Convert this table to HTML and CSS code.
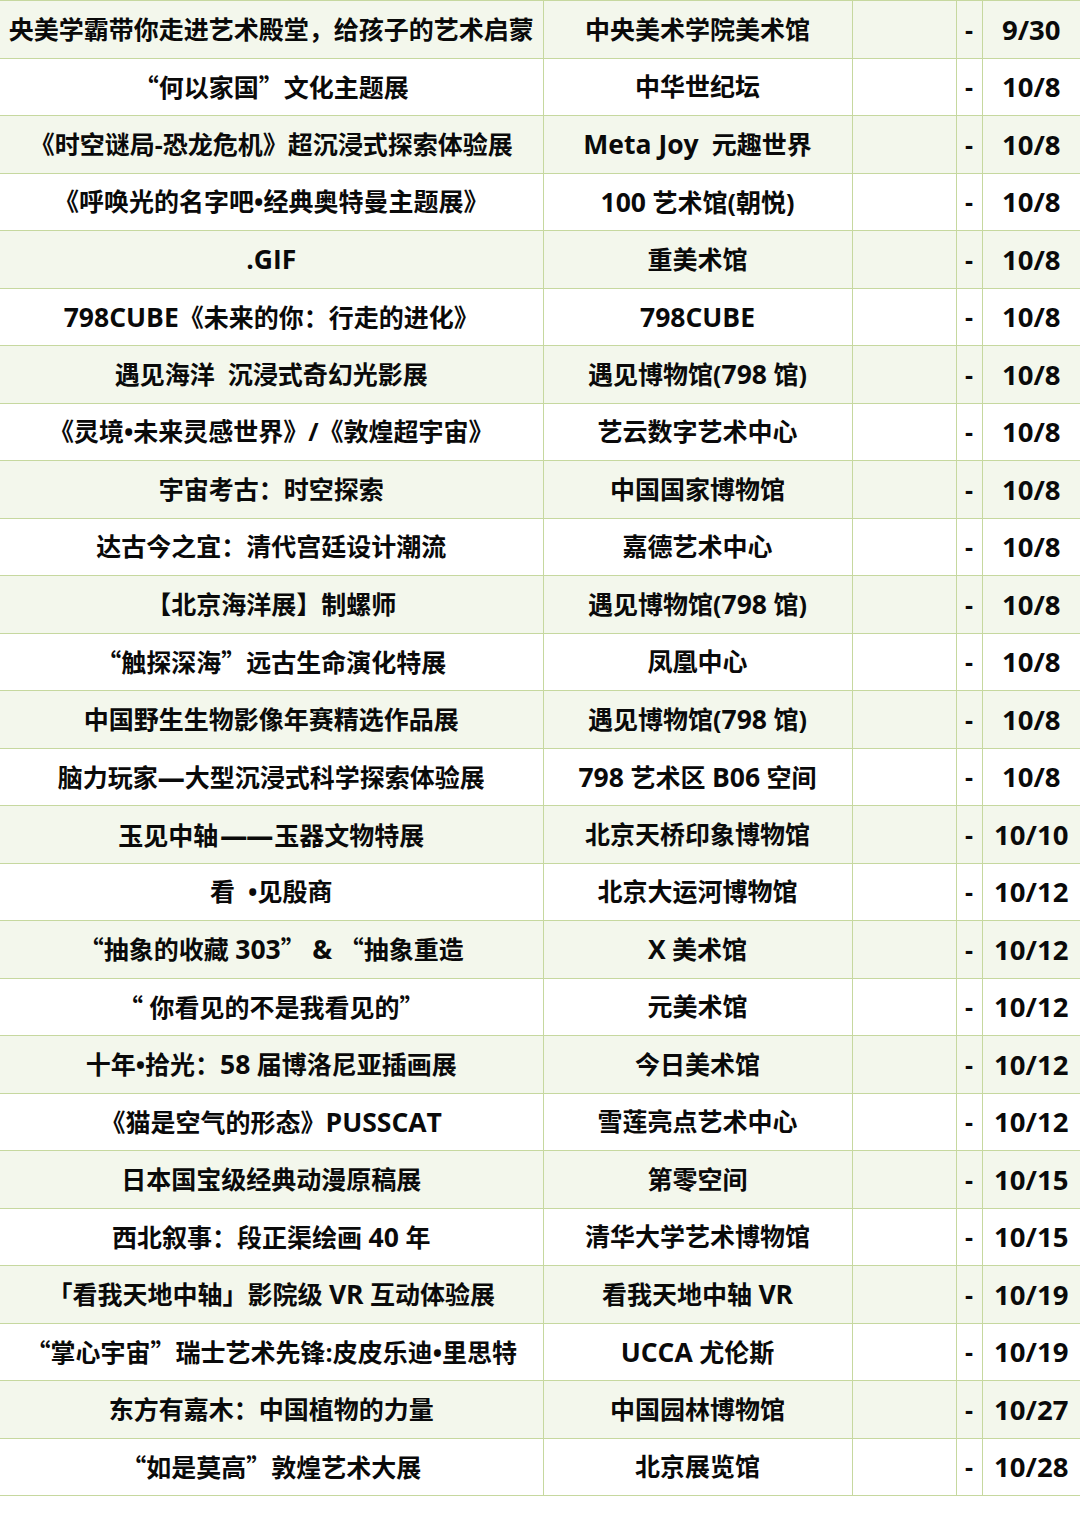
FILE: index.html
```html
<!DOCTYPE html>
<html lang="zh-CN">
<head>
<meta charset="utf-8">
<link rel="stylesheet" href="styles.css">
</head>
<body>
<table class="list">
<colgroup><col class="c-name"><col class="c-venue"><col class="c-blank"><col class="c-dash"><col class="c-date"></colgroup>
<tbody>
<tr class="alt"><td>央美学霸带你走进艺术殿堂，给孩子的艺术启蒙</td><td>中央美术学院美术馆</td><td></td><td>-</td><td class="date">9/30</td></tr>
<tr><td><span class="q">“</span>何以家国<span class="q">”</span>文化主题展</td><td>中华世纪坛</td><td></td><td>-</td><td class="date">10/8</td></tr>
<tr class="alt"><td>《时空谜局-恐龙危机》超沉浸式探索体验展</td><td><span class="lat">Meta Joy</span>&nbsp; 元趣世界</td><td></td><td>-</td><td class="date">10/8</td></tr>
<tr><td>《呼唤光的名字吧•经典奥特曼主题展》</td><td><span class="lat">100</span> 艺术馆(朝悦)</td><td></td><td>-</td><td class="date">10/8</td></tr>
<tr class="alt"><td><span class="lat">.GIF</span></td><td>重美术馆</td><td></td><td>-</td><td class="date">10/8</td></tr>
<tr><td><span class="lat">798CUBE</span>《未来的你：行走的进化》</td><td><span class="lat">798CUBE</span></td><td></td><td>-</td><td class="date">10/8</td></tr>
<tr class="alt"><td>遇见海洋&nbsp; 沉浸式奇幻光影展</td><td>遇见博物馆(<span class="lat">798</span> 馆)</td><td></td><td>-</td><td class="date">10/8</td></tr>
<tr><td>《灵境•未来灵感世界》/《敦煌超宇宙》</td><td>艺云数字艺术中心</td><td></td><td>-</td><td class="date">10/8</td></tr>
<tr class="alt"><td>宇宙考古：时空探索</td><td>中国国家博物馆</td><td></td><td>-</td><td class="date">10/8</td></tr>
<tr><td>达古今之宜：清代宫廷设计潮流</td><td>嘉德艺术中心</td><td></td><td>-</td><td class="date">10/8</td></tr>
<tr class="alt"><td>【北京海洋展】制螺师</td><td>遇见博物馆(<span class="lat">798</span> 馆)</td><td></td><td>-</td><td class="date">10/8</td></tr>
<tr><td><span class="q">“</span>触探深海<span class="q">”</span>远古生命演化特展</td><td>凤凰中心</td><td></td><td>-</td><td class="date">10/8</td></tr>
<tr class="alt"><td>中国野生生物影像年赛精选作品展</td><td>遇见博物馆(<span class="lat">798</span> 馆)</td><td></td><td>-</td><td class="date">10/8</td></tr>
<tr><td>脑力玩家<span class="dash">—</span>大型沉浸式科学探索体验展</td><td><span class="lat">798</span> 艺术区 <span class="lat">B06</span> 空间</td><td></td><td>-</td><td class="date">10/8</td></tr>
<tr class="alt"><td>玉见中轴<span class="dash dbl">——</span>玉器文物特展</td><td>北京天桥印象博物馆</td><td></td><td>-</td><td class="date">10/10</td></tr>
<tr><td>看&nbsp; •见殷商</td><td>北京大运河博物馆</td><td></td><td>-</td><td class="date">10/12</td></tr>
<tr class="alt"><td><span class="q">“</span>抽象的收藏 <span class="lat">303</span><span class="q">”</span>&nbsp;<span class="lat">&amp;</span>&nbsp;<span class="q">“</span>抽象重造</td><td><span class="lat">X</span> 美术馆</td><td></td><td>-</td><td class="date">10/12</td></tr>
<tr><td><span class="q">“</span>&nbsp;你看见的不是我看见的<span class="q">”</span></td><td>元美术馆</td><td></td><td>-</td><td class="date">10/12</td></tr>
<tr class="alt"><td>十年•拾光：<span class="lat">58</span> 届博洛尼亚插画展</td><td>今日美术馆</td><td></td><td>-</td><td class="date">10/12</td></tr>
<tr><td>《猫是空气的形态》<span class="lat">PUSSCAT</span></td><td>雪莲亮点艺术中心</td><td></td><td>-</td><td class="date">10/12</td></tr>
<tr class="alt"><td>日本国宝级经典动漫原稿展</td><td>第零空间</td><td></td><td>-</td><td class="date">10/15</td></tr>
<tr><td>西北叙事：段正渠绘画 <span class="lat">40</span> 年</td><td>清华大学艺术博物馆</td><td></td><td>-</td><td class="date">10/15</td></tr>
<tr class="alt"><td>「看我天地中轴」影院级 <span class="lat">VR</span> 互动体验展</td><td>看我天地中轴 <span class="lat">VR</span></td><td></td><td>-</td><td class="date">10/19</td></tr>
<tr><td><span class="q">“</span>掌心宇宙<span class="q">”</span>瑞士艺术先锋:皮皮乐迪•里思特</td><td><span class="lat">UCCA</span> 尤伦斯</td><td></td><td>-</td><td class="date">10/19</td></tr>
<tr class="alt"><td>东方有嘉木：中国植物的力量</td><td>中国园林博物馆</td><td></td><td>-</td><td class="date">10/27</td></tr>
<tr><td><span class="q">“</span>如是莫高<span class="q">”</span>敦煌艺术大展</td><td>北京展览馆</td><td></td><td>-</td><td class="date">10/28</td></tr>
</tbody>
</table>
</body>
</html>
```
FILE: styles.css
```css
html, body {
  margin: 0;
  padding: 0;
  background: #ffffff;
}
.list {
  border-collapse: collapse;
  table-layout: fixed;
  width: 1080px;
  font-family: "Open Sans", "Noto Sans CJK SC", sans-serif;
  font-weight: 700;
  font-size: 25px;
  color: #0a0a0a;
}
.c-name { width: 543px; }
.c-venue { width: 309px; }
.c-blank { width: 104px; }
.c-dash { width: 26px; }
.c-date { width: 98px; }
.list tr {
  height: 57.5px;
}
.list tr.alt td {
  background: #f3f7ec;
}
.list td {
  border: 1px solid #c6d89f;
  padding: 0;
  text-align: center;
  vertical-align: middle;
  white-space: nowrap;
  overflow: hidden;
  line-height: 1;
}
.list td:first-child { border-left: none; }
.list td:last-child { border-right: none; }
.list td.date {
  font-size: 27.5px;
}
.lat {
  font-size: 26.5px;
}
.q {
  font-family: "Noto Sans CJK SC", sans-serif;
  font-feature-settings: "fwid" 1;
}
.dash {
  font-family: "Open Sans", sans-serif;
  font-weight: 800;
  font-size: 27px;
}
.dash.dbl {
  letter-spacing: -1px;
  padding: 0 2px;
}
```
